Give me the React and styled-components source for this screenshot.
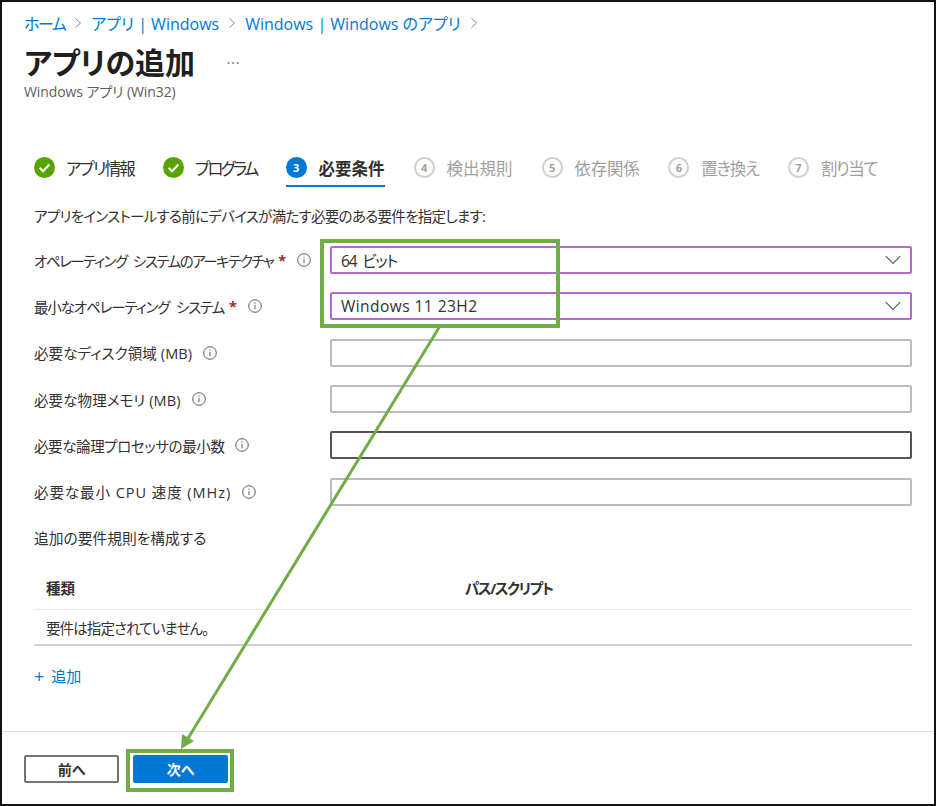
import React from "react";
import styled, { createGlobalStyle } from "styled-components";

const Global = createGlobalStyle`
  html, body { margin: 0; padding: 0; background: #fff; }
  body {
    font-family: "Open Sans", "Noto Sans CJK JP", sans-serif;
    font-feature-settings: "palt";
    color: #323130;
  }
`;

const Frame = styled.div`
  position: relative;
  box-sizing: border-box;
  width: 936px;
  height: 806px;
  border: 2px solid #111;
  display: flex;
  flex-direction: column;
`;
const Main = styled.div`
  flex: 1;
  padding: 0 22px 0 32px;
`;
const Header = styled.div`
  margin-left: -10px;
  padding-top: 10px;
`;
const Crumbs = styled.div`
  display: flex;
  align-items: center;
  height: 22px;
  font-size: 16px;
  color: #0078d4;
`;
const Crumb = styled.span`
  letter-spacing: ${p => p.$track || 0}px;
`;
const CrumbSep = styled.svg`
  width: 8px;
  height: 12px;
  margin: 0 9px;
  fill: none;
  stroke: #8a8886;
  stroke-width: 1;
`;
const TitleRow = styled.div`
  display: flex;
  align-items: center;
  height: 43px;
  margin-top: 7px;
`;
const Title = styled.h1`
  margin: 0;
  font-size: 30px;
  line-height: 36px;
  font-weight: 700;
  color: #201f1e;
  width: 200px;
`;
const More = styled.span`
  font-size: 14px;
  line-height: 16px;
  color: #605e5c;
  margin-left: 2px;
`;
const Sub = styled.div`
  font-size: 14px;
  line-height: 16px;
  color: #605e5c;
  letter-spacing: -0.1px;
`;

const Steps = styled.div`
  display: flex;
  gap: 29px;
  margin-top: 50px;
`;
const Step = styled.div`
  display: flex;
  align-items: center;
  gap: 11px;
  height: 37px;
  box-sizing: border-box;
  font-size: 16.5px;
  font-weight: ${p => (p.$active ? 700 : 400)};
  color: ${p => (p.$off ? "#a19f9d" : "#323130")};
  border-bottom: 2px solid ${p => (p.$active ? "#0078d4" : "transparent")};
`;
const StepLabel = styled.span`
  letter-spacing: ${p => p.$track || 0}px;
`;
const Badge = styled.span`
  box-sizing: border-box;
  width: 21px;
  height: 21px;
  margin-right: 1px;
  border-radius: 50%;
  display: flex;
  align-items: center;
  justify-content: center;
  flex: none;
  font-size: 11px;
  font-weight: 700;
  color: ${p => (p.$off ? "#a19f9d" : "#fff")};
  background: ${p => (p.$off ? "transparent" : "#0078d4")};
  border: ${p => (p.$off ? "2px solid #d2d0ce" : "none")};
`;
const CheckIcon = styled.svg`
  width: 21px;
  height: 21px;
  flex: none;
`;

const Intro = styled.div`
  margin-top: 19px;
  height: 22px;
  line-height: 22px;
  font-size: 14.5px;
  letter-spacing: -0.7px;
`;
const Form = styled.div`
  margin-top: 9px;
`;
const Row = styled.div`
  display: grid;
  grid-template-columns: 296px 582px;
  align-items: center;
  height: 46.33px;
`;
const Label = styled.div`
  display: flex;
  align-items: center;
  font-size: 14.5px;
  white-space: nowrap;
`;
const LabelText = styled.span`
  letter-spacing: ${p => p.$track || 0}px;
  word-spacing: ${p => p.$word || 0}px;
`;
const Star = styled.span`
  color: #a4262c;
  margin-left: 5px;
  font-weight: 700;
`;
const InfoIcon = styled.svg`
  width: 14px;
  height: 14px;
  margin-left: 11px;
  fill: none;
  stroke: #605e5c;
  stroke-width: 1;
`;
const Field = styled.div`
  box-sizing: border-box;
  height: 28px;
  display: flex;
  align-items: center;
  justify-content: space-between;
  padding: 0 9px;
  font-size: 15.5px;
  border-radius: 2px;
  background: #fff;
  border: 2px solid ${p => p.$color || "#bdbcba"};
`;
const Value = styled.span`
  letter-spacing: ${p => p.$track || 0}px;
  word-spacing: ${p => p.$word || 0}px;
`;
const Chevron = styled.svg`
  width: 16px;
  height: 10px;
  fill: none;
  stroke: #605e5c;
  stroke-width: 1.2;
`;

const SectionTitle = styled.div`
  height: 46px;
  line-height: 46px;
  font-size: 14.75px;
`;
const Table = styled.div`
  width: 878px;
  margin-top: 6px;
  font-size: 14.5px;
`;
const HeadRow = styled.div`
  display: grid;
  grid-template-columns: 419px 1fr;
  align-items: center;
  height: 42px;
  padding-left: 12px;
  font-weight: 700;
  border-bottom: 1px solid #edebe9;
`;
const HeadCell = styled.span`
  letter-spacing: ${p => p.$track || 0}px;
`;
const BodyRow = styled.div`
  display: flex;
  align-items: center;
  height: 36px;
  padding: 1px 0 0 12px;
  box-sizing: border-box;
  letter-spacing: -0.9px;
  border-bottom: 2px solid #d2d0ce;
`;
const AddLink = styled.div`
  display: flex;
  align-items: center;
  margin-top: 18px;
  height: 24px;
  font-size: 15px;
  color: #0078d4;
`;
const Plus = styled.span`
  font-size: 18px;
  margin-right: 7px;
`;

const Footer = styled.div`
  flex: none;
  height: 73px;
  border-top: 1px solid #e1dfdd;
  display: flex;
  gap: 14px;
  padding: 23px 0 0 22px;
  box-sizing: border-box;
`;
const Button = styled.div`
  box-sizing: border-box;
  width: 95px;
  height: 28px;
  display: flex;
  align-items: center;
  justify-content: center;
  border-radius: 2px;
  font-size: 14px;
  font-weight: 700;
  color: ${p => (p.$primary ? "#fff" : "#323130")};
  background: ${p => (p.$primary ? "#0078d4" : "#fff")};
  border: 2px solid ${p => (p.$primary ? "#0078d4" : "#757473")};
`;

const Callout = styled.div`
  position: absolute;
  box-sizing: border-box;
  border: 4px solid #70ad47;
  left: ${p => p.$x}px;
  top: ${p => p.$y}px;
  width: ${p => p.$w}px;
  height: ${p => p.$h}px;
`;
const ArrowLayer = styled.svg`
  position: absolute;
  left: -2px;
  top: -2px;
  width: 936px;
  height: 806px;
  pointer-events: none;
`;

const Sep = () => (
  <CrumbSep viewBox="0 0 8 12">
    <path d="M1.5 1.5 6.5 6 1.5 10.5" />
  </CrumbSep>
);

const Check = () => (
  <CheckIcon viewBox="0 0 21 21">
    <circle cx="10.5" cy="10.5" r="10.5" fill="#57a300" />
    <path d="M5.6 10.8 9 14.2 15.4 7.4" fill="none" stroke="#fff" strokeWidth="2.2" />
  </CheckIcon>
);

const Info = () => (
  <InfoIcon viewBox="0 0 14 14">
    <circle cx="7" cy="7" r="6.3" />
    <path d="M7 6v4.2M7 3.6v1.2" />
  </InfoIcon>
);

const Down = () => (
  <Chevron viewBox="0 0 16 10">
    <path d="M.8 1.2 8 8.4 15.2 1.2" />
  </Chevron>
);

const steps = [
  { label: "アプリ情報", done: true, track: -1.8 },
  { label: "プログラム", done: true, track: -2.8 },
  { label: "必要条件", n: 3, active: true },
  { label: "検出規則", n: 4, off: true },
  { label: "依存関係", n: 5, off: true, track: -0.3 },
  { label: "置き換え", n: 6, off: true, track: -1.2 },
  { label: "割り当て", n: 7, off: true, track: -1.4 },
];

const rows = [
  { label: "オペレーティング システムのアーキテクチャ", track: -1.5, word: 4, req: true, value: "64 ビット", valueTrack: -1.1, valueWord: 3, select: true },
  { label: "最小なオペレーティング システム", track: -1.15, word: 4, req: true, value: "Windows 11 23H2", valueTrack: 0.45, select: true },
  { label: "必要なディスク領域 (MB)", track: 0.1 },
  { label: "必要な物理メモリ (MB)", track: 0.1 },
  { label: "必要な論理プロセッサの最小数", track: -0.4, color: "#555453" },
  { label: "必要な最小 CPU 速度 (MHz)", track: 0.95 },
];

export default function App() {
  return (
    <>
      <Global />
      <Frame>
        <Main>
          <Header>
            <Crumbs>
              <Crumb $track={-1.5}>ホーム</Crumb>
              <Sep />
              <Crumb>アプリ | Windows</Crumb>
              <Sep />
              <Crumb>Windows | Windows のアプリ</Crumb>
              <Sep />
            </Crumbs>
            <TitleRow>
              <Title>アプリの追加</Title>
              <More>⋯</More>
            </TitleRow>
            <Sub>Windows アプリ (Win32)</Sub>
          </Header>

          <Steps>
            {steps.map(s => (
              <Step key={s.label} $active={s.active} $off={s.off}>
                {s.done ? <Check /> : <Badge $off={s.off}>{s.n}</Badge>}
                <StepLabel $track={s.track}>{s.label}</StepLabel>
              </Step>
            ))}
          </Steps>

          <Intro>アプリをインストールする前にデバイスが満たす必要のある要件を指定します:</Intro>

          <Form>
            {rows.map(r => (
              <Row key={r.label}>
                <Label>
                  <LabelText $track={r.track} $word={r.word}>{r.label}</LabelText>
                  {r.req && <Star>*</Star>}
                  <Info />
                </Label>
                <Field $color={r.select ? "#b46ad0" : r.color}>
                  <Value $track={r.valueTrack} $word={r.valueWord}>{r.value}</Value>
                  {r.select && <Down />}
                </Field>
              </Row>
            ))}
          </Form>

          <SectionTitle>追加の要件規則を構成する</SectionTitle>
          <Table>
            <HeadRow>
              <HeadCell>種類</HeadCell>
              <HeadCell $track={-1.4}>パス/スクリプト</HeadCell>
            </HeadRow>
            <BodyRow>要件は指定されていません。</BodyRow>
          </Table>
          <AddLink>
            <Plus>+</Plus>追加
          </AddLink>
        </Main>

        <Footer>
          <Button>前へ</Button>
          <Button $primary>次へ</Button>
        </Footer>

        <Callout $x={318} $y={237} $w={240} $h={89} />
        <Callout $x={124} $y={747} $w={108} $h={43} />
        <ArrowLayer viewBox="0 0 936 806">
          <path d="M440 326 187 740" stroke="#70ad47" strokeWidth="3" fill="none" />
          <path d="M181 749 182 734 194 741Z" fill="#70ad47" />
        </ArrowLayer>
      </Frame>
    </>
  );
}
